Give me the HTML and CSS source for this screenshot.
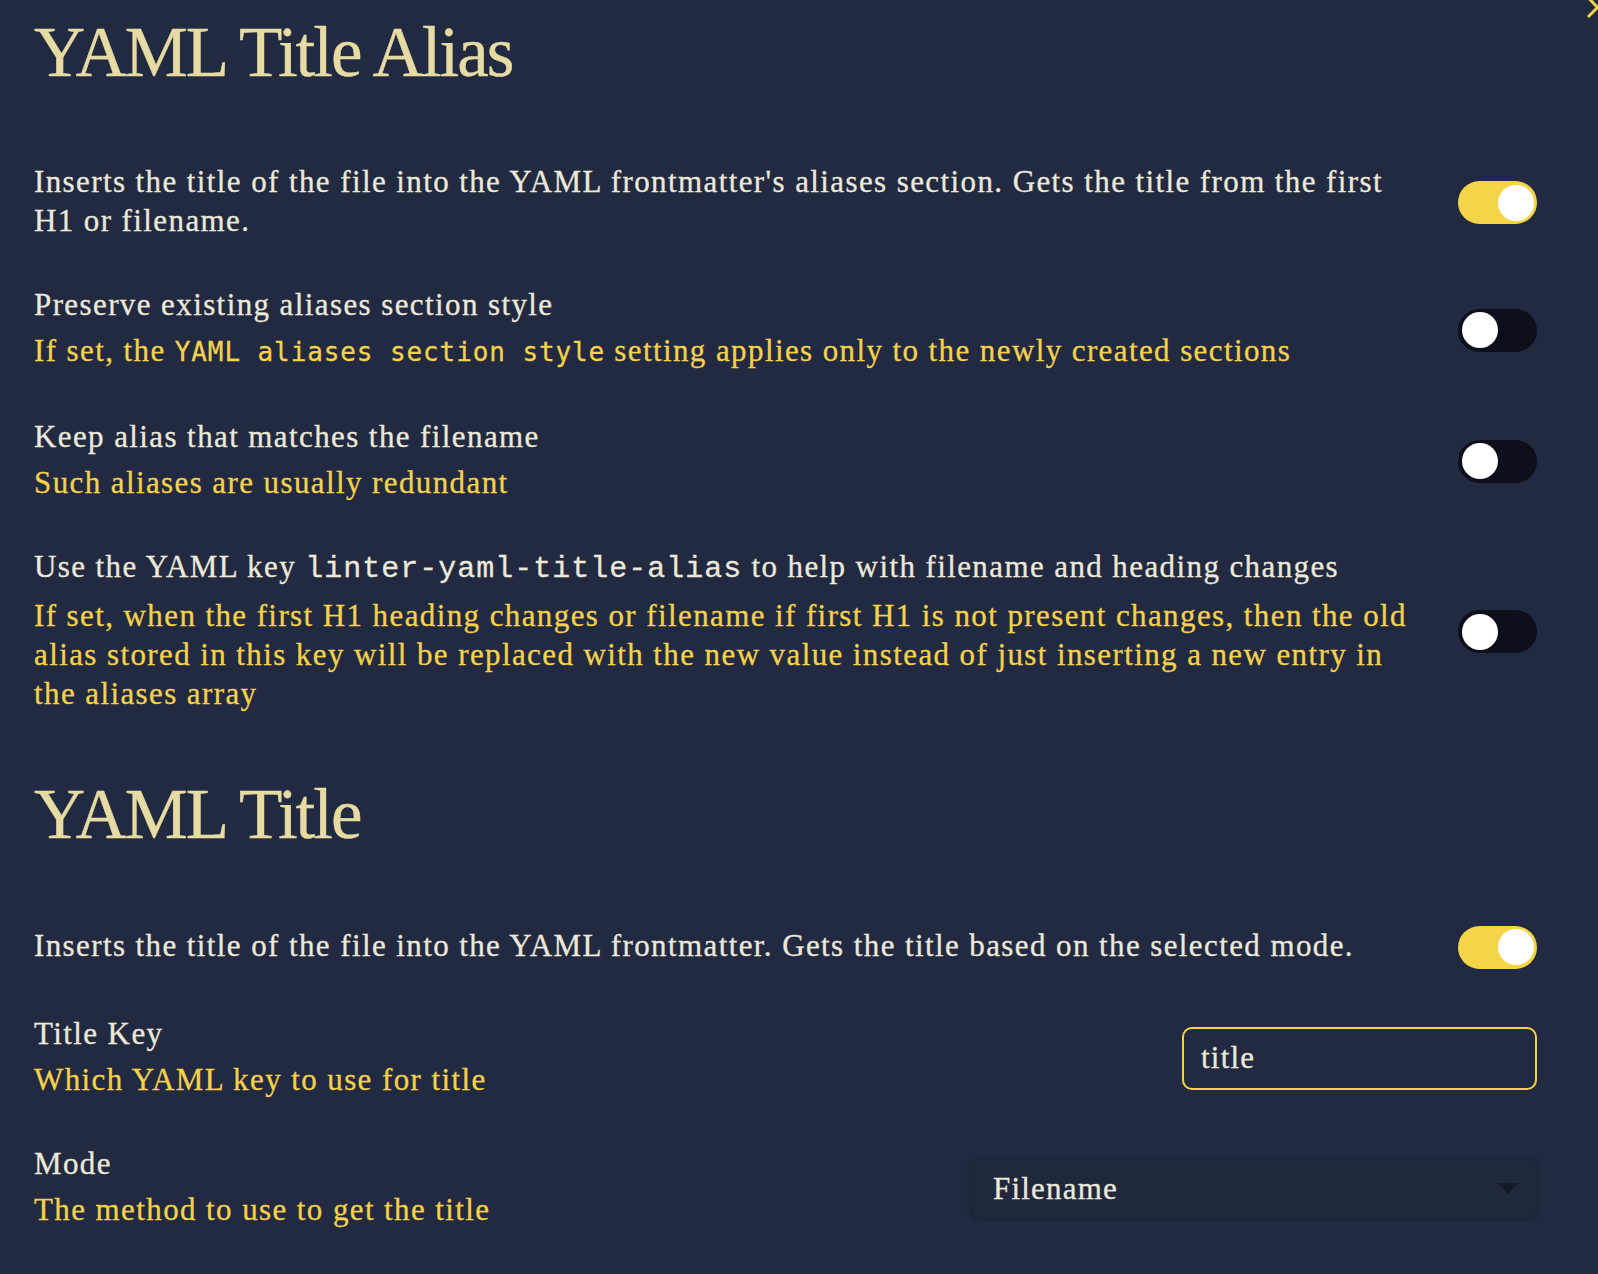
FILE: index.html
```html
<!DOCTYPE html>
<html lang="en">
<head>
<meta charset="utf-8">
<title>YAML Title Alias</title>
<link rel="stylesheet" href="styles.css">
</head>
<body>
<div class="page">
  <svg class="corner-icon" viewBox="0 0 18 20" width="18" height="20" aria-hidden="true">
    <polyline points="9.5,-1 17.5,7.5 8,17" fill="none" stroke="#f5d547" stroke-width="3"/>
  </svg>

  <h1 class="section-title">YAML Title Alias</h1>

  <div class="item">
    <div class="info">
      <div class="name">Inserts the title of the file into the YAML frontmatter's aliases section. Gets the title from the first H1 or filename.</div>
    </div>
    <div class="control"><div class="toggle on"><span class="knob"></span></div></div>
  </div>

  <div class="item">
    <div class="info">
      <div class="name">Preserve existing aliases section style</div>
      <div class="desc">If set, the <code class="desc-code">YAML aliases section style</code> setting applies only to the newly created sections</div>
    </div>
    <div class="control"><div class="toggle"><span class="knob"></span></div></div>
  </div>

  <div class="item">
    <div class="info">
      <div class="name">Keep alias that matches the filename</div>
      <div class="desc">Such aliases are usually redundant</div>
    </div>
    <div class="control"><div class="toggle"><span class="knob"></span></div></div>
  </div>

  <div class="item">
    <div class="info">
      <div class="name">Use the YAML key <code class="name-code">linter-yaml-title-alias</code> to help with filename and heading changes</div>
      <div class="desc">If set, when the first H1 heading changes or filename if first H1 is not present changes, then the old alias stored in this key will be replaced with the new value instead of just inserting a new entry in the aliases array</div>
    </div>
    <div class="control"><div class="toggle"><span class="knob"></span></div></div>
  </div>

  <h1 class="section-title second">YAML Title</h1>

  <div class="item">
    <div class="info">
      <div class="name">Inserts the title of the file into the YAML frontmatter. Gets the title based on the selected mode.</div>
    </div>
    <div class="control"><div class="toggle on"><span class="knob"></span></div></div>
  </div>

  <div class="item">
    <div class="info">
      <div class="name">Title Key</div>
      <div class="desc">Which YAML key to use for title</div>
    </div>
    <div class="control"><input class="text-input" type="text" value="title"></div>
  </div>

  <div class="item">
    <div class="info">
      <div class="name">Mode</div>
      <div class="desc">The method to use to get the title</div>
    </div>
    <div class="control">
      <div class="dropdown">
        <span>Filename</span>
        <svg class="dropdown-arrow" viewBox="0 0 22 11" width="22" height="11" aria-hidden="true">
          <polygon points="0,0 22,0 11,11" fill="#141a29"/>
        </svg>
      </div>
    </div>
  </div>
</div>
</body>
</html>
```

FILE: styles.css
```css
html, body {
  margin: 0;
  padding: 0;
  background: #222a41;
}

.page {
  position: relative;
  padding: 12px 61px 20px 34px;
  font-family: "Liberation Serif", "Times New Roman", serif;
  font-size: 31px;
  line-height: 39px;
  letter-spacing: 1.4px;
  color: #ece9da;
  -webkit-text-stroke: 0.3px currentColor;
}

.corner-icon {
  position: absolute;
  top: 0;
  right: 0;
  display: block;
}

.section-title {
  margin: 0 0 47px;
  font-family: "Liberation Serif", "Times New Roman", serif;
  font-weight: normal;
  font-size: 71px;
  line-height: 80px;
  letter-spacing: -2px;
  color: #e6dba2;
  -webkit-text-stroke: 0.4px currentColor;
}

.section-title.second {
  margin-top: 39px;
  margin-bottom: 45px;
}

.item {
  display: flex;
  align-items: center;
  padding: 22.5px 0;
}

.info {
  flex: 1 1 auto;
  min-width: 0;
  margin-right: 36px;
}

.name {
  color: #ece9da;
}

.desc {
  margin-top: 7px;
  color: #f5d24b;
}

.name-code {
  font-family: "Liberation Mono", "Courier New", monospace;
  font-size: 30px;
  letter-spacing: 1px;
}

.desc-code {
  font-family: "DejaVu Sans Mono", monospace;
  font-size: 26px;
  letter-spacing: 0.9px;
}

.control {
  flex: 0 0 auto;
  display: flex;
  justify-content: flex-end;
  padding-top: 4px;
}

.toggle {
  box-sizing: border-box;
  width: 79px;
  height: 43px;
  padding: 0 3.5px;
  border-radius: 22px;
  background: #0d101b;
  display: flex;
  align-items: center;
  justify-content: flex-start;
}

.toggle.on {
  background: #f5d547;
  justify-content: flex-end;
}

.knob {
  display: block;
  width: 36px;
  height: 36px;
  border-radius: 50%;
  background: #ffffff;
}

.text-input {
  box-sizing: border-box;
  width: 355px;
  height: 63px;
  margin: 0;
  padding: 0 17px;
  border: 2px solid #f5d547;
  border-radius: 10px;
  background: #222a41;
  color: #ece9da;
  font-family: "Liberation Serif", "Times New Roman", serif;
  font-size: 31px;
  letter-spacing: 1.2px;
  -webkit-text-stroke: 0.3px #ece9da;
  outline: none;
}

.dropdown {
  box-sizing: border-box;
  width: 566px;
  height: 60px;
  padding: 0 18px 0 22px;
  border-radius: 10px;
  background: #20283d;
  box-shadow: 0 1px 5px rgba(0, 0, 0, 0.28);
  display: flex;
  align-items: center;
  justify-content: space-between;
  color: #ece9da;
  letter-spacing: 1.2px;
}

.dropdown-arrow {
  display: block;
}
```
